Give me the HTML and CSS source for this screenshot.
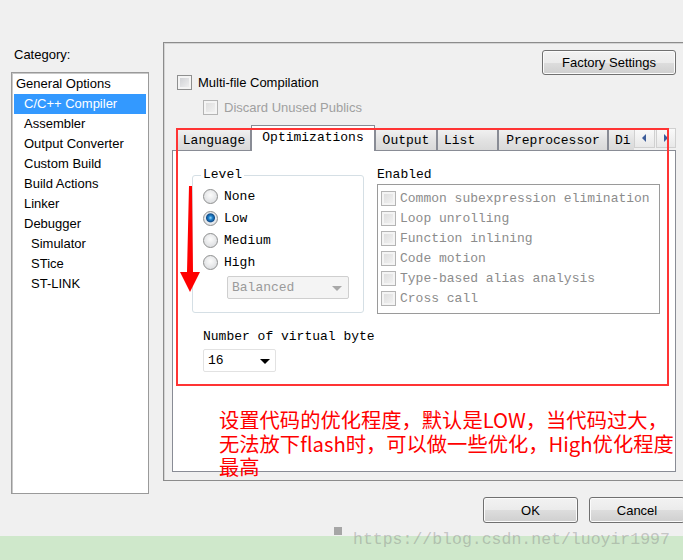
FILE: index.html
```html
<!DOCTYPE html>
<html lang="zh">
<head>
    <meta charset="UTF-8">
    <title>Options for node</title>
    <link rel="stylesheet" href="styles.css">
</head>
<body>

<div class="dialog">
    <div class="sidebar">
        <div class="cat-label">Category:</div>
        <ul class="cat-list">
            <li>General Options</li>
            <li class="lvl1 selected">C/C++ Compiler</li>
            <li class="lvl1">Assembler</li>
            <li class="lvl1">Output Converter</li>
            <li class="lvl1">Custom Build</li>
            <li class="lvl1">Build Actions</li>
            <li class="lvl1">Linker</li>
            <li class="lvl1">Debugger</li>
            <li class="lvl2">Simulator</li>
            <li class="lvl2">STice</li>
            <li class="lvl2">ST-LINK</li>
        </ul>
    </div>

    <div class="main">
        <div class="panel">
            <div class="panel-top">
                <div class="top-opts">
                    <div class="check"><span class="box"></span>Multi-file Compilation</div>
                    <div class="check sub disabled"><span class="box"></span>Discard Unused Publics</div>
                </div>
                <button class="btn factory">Factory Settings</button>
            </div>

            <div class="tabs">
                <div class="tab-row">
                    <div class="tab-strip">
                        <span class="tab w-lang">Language</span>
                        <span class="tab active w-opt">Optimizations</span>
                        <span class="tab w-out">Output</span>
                        <span class="tab w-list">List</span>
                        <span class="tab w-pre">Preprocessor</span>
                        <span class="tab w-di">Di</span>
                    </div>
                    <div class="tab-scroll">
                        <span class="scroll-btn"><span class="tri left"></span></span>
                        <span class="scroll-btn"><span class="tri right"></span></span>
                    </div>
                </div>

                <div class="tab-body">
                    <div class="opt-row">
                        <fieldset class="level">
                            <legend>Level</legend>
                            <div class="radio"><span class="dot"></span>None</div>
                            <div class="radio"><span class="dot on"></span>Low</div>
                            <div class="radio"><span class="dot"></span>Medium</div>
                            <div class="radio"><span class="dot"></span>High</div>
                            <div class="combo disabled balanced">Balanced<span class="caret"></span></div>
                        </fieldset>

                        <div class="enabled">
                            <div class="enabled-label">Enabled</div>
                            <div class="enabled-list">
                                <div class="item"><span class="box"></span>Common subexpression elimination</div>
                                <div class="item"><span class="box"></span>Loop unrolling</div>
                                <div class="item"><span class="box"></span>Function inlining</div>
                                <div class="item"><span class="box"></span>Code motion</div>
                                <div class="item"><span class="box"></span>Type-based alias analysis</div>
                                <div class="item"><span class="box"></span>Cross call</div>
                            </div>
                        </div>
                    </div>

                    <div class="vbyte">
                        <div class="vbyte-label">Number of virtual byte</div>
                        <div class="combo vbyte-combo">16<span class="caret"></span></div>
                    </div>

                    <p class="note">设置代码的优化程度，默认是LOW，当代码过大，<br>无法放下flash时，可以做一些优化，High优化程度<br>最高</p>
                </div>

                <!-- annotation drawn over the screenshot -->
                <div class="mark-box"></div>
                <svg class="mark-arrow" width="22" height="108" viewBox="0 0 22 108">
                    <polygon points="9,0 12,0 13,86 20,86 10,106 0,86 7,86" fill="#ff0000"/>
                </svg>
            </div>
        </div>

        <div class="actions">
            <button class="btn ok">OK</button>
            <button class="btn cancel">Cancel</button>
        </div>
    </div>
</div>

<div class="footer"></div>
<div class="watermark"><span class="wm-square"></span><span class="wm-text">https://blog.csdn.net/luoyir1997</span></div>

</body>
</html>
```

FILE: styles.css
```css
* {
    box-sizing: border-box;
}
body {
    margin: 0;
    width: 683px;
    height: 560px;
    overflow: hidden;
    position: relative;
    background: #f0f0f0;
    font-family: "Liberation Sans", Arial, sans-serif;
    font-size: 13px;
    color: #000;
}
.dialog {
    display: flex;
    height: 536px;
}

/* left category list */
.sidebar {
    width: 163px;
    flex: none;
    padding: 47px 0 0 11px;
}
.cat-label {
    height: 16px;
    line-height: 16px;
    padding-left: 3px;
}
.cat-list {
    list-style: none;
    margin: 9px 0 0;
    padding: 1px 2px;
    width: 138px;
    height: 422px;
    background: #fff;
    border: 1px solid #9a9a9a;
    box-shadow: inset 1px 1px 0 #c8c8c8;
}
.cat-list li {
    height: 20px;
    line-height: 20px;
    padding-left: 2px;
    white-space: nowrap;
}
.cat-list .lvl1 {
    padding-left: 10px;
}
.cat-list .lvl2 {
    padding-left: 17px;
}
.cat-list .selected {
    background: #3399ff;
    color: #fff;
}

/* right side */
.main {
    flex: 1;
    padding-top: 42px;
}
.panel {
    width: 530px;
    height: 439px;
    border: 1px solid #8c8c8c;
    box-shadow: inset 1px 1px 0 #d4d4d4;
    padding: 0 16px 0 8px;
}
.panel-top {
    display: flex;
    justify-content: space-between;
    height: 77px;
}
.top-opts {
    padding: 27px 0 0 5px;
}
.check {
    display: flex;
    align-items: center;
    gap: 6px;
    height: 25px;
    white-space: nowrap;
}
.check.sub {
    padding-left: 26px;
}
.disabled {
    color: #a0a0a0;
}
.box {
    flex: none;
    width: 15px;
    height: 15px;
    border: 1px solid #8e8f8f;
    background: linear-gradient(135deg, #c9cbcf, #f5f5f5);
    box-shadow: inset 0 0 0 2px #f4f4f4;
}
.disabled .box,
.enabled-list .box {
    border-color: #b4b4b4;
    background: linear-gradient(135deg, #dadada, #f5f5f5);
}

.btn {
    font: inherit;
    color: #000;
    padding: 0;
    border: 1px solid #707070;
    border-radius: 3px;
    background: linear-gradient(#f2f2f2 0%, #ebebeb 50%, #dddddd 51%, #cfcfcf 100%);
    box-shadow: inset 0 0 0 1px #fbfbfb;
}
.factory {
    width: 134px;
    height: 25px;
    margin-top: 7px;
}

/* tab control */
.tabs {
    position: relative;
    margin-top: 5px;
    font-family: "Liberation Mono", monospace;
    font-size: 13px;
}
.tab-row {
    position: relative;
    z-index: 1;
    display: flex;
    align-items: flex-end;
    height: 26px;
    padding-left: 5px;
}
.tab-strip {
    display: flex;
    align-items: flex-end;
    flex: 1;
    height: 26px;
    overflow: hidden;
}
.tab {
    flex: none;
    height: 22px;
    margin-bottom: 1px;
    line-height: 24px;
    text-align: center;
    white-space: nowrap;
    overflow: hidden;
    border: 1px solid #898c95;
    border-bottom: none;
    background: linear-gradient(#f2f2f2, #e3e3e3 50%, #d9d9d9);
}
.tab.active {
    height: 26px;
    margin-bottom: 0;
    line-height: 23px;
    background: #fff;
}
.w-lang { width: 74px; }
.w-opt { width: 124px; }
.w-out { width: 62px; }
.w-list { width: 61px; text-align: left; padding-left: 6px; }
.w-pre { width: 110px; }
.w-di { width: 40px; text-align: left; padding-left: 6px; }
.tab-scroll {
    display: flex;
    gap: 1px;
    width: 42px;
    height: 20px;
    margin-bottom: 3px;
}
.scroll-btn {
    flex: 1;
    display: flex;
    align-items: center;
    justify-content: center;
    border: 1px solid #d0d0d0;
    background: linear-gradient(#fafafa, #e8e8e8);
}
.tri {
    width: 0;
    height: 0;
    border-top: 4px solid transparent;
    border-bottom: 4px solid transparent;
}
.tri.left {
    border-right: 4px solid #3d5c9a;
}
.tri.right {
    border-left: 4px solid #3d5c9a;
}

.tab-body {
    margin-top: -1px;
    height: 322px;
    border: 1px solid #898c95;
    background: #fff;
    padding: 16px 0 0 19px;
}
.opt-row {
    display: flex;
    gap: 13px;
    align-items: flex-start;
}
.level {
    width: 172px;
    margin: 0;
    padding: 2px 0 13px 10px;
    border: 1px solid #d5dfe5;
    border-radius: 3px;
}
.level legend {
    padding: 0 2px;
    margin-left: -2px;
    line-height: 16px;
}
.radio {
    display: flex;
    align-items: center;
    gap: 6px;
    height: 22px;
}
.dot {
    flex: none;
    width: 15px;
    height: 15px;
    border-radius: 50%;
    border: 1px solid #8e8f8f;
    background: radial-gradient(circle at 50% 40%, #fcfcfc, #d4d6d9);
}
.dot.on {
    background: radial-gradient(circle at 50% 45%, #9bd9fb 0, #1f82cc 2px, #124f8c 4px, #e9ecef 5px, #d4d6d9 100%);
}
.combo {
    position: relative;
    height: 23px;
    line-height: 21px;
    padding-left: 4px;
    border: 1px solid #dcdcdc;
    border-radius: 2px;
    background: #fff;
}
.balanced {
    width: 122px;
    margin: 3px 0 0 24px;
    background: #f4f4f4;
    border-color: #cfcfcf;
    color: #9a9a9a;
}
.caret {
    position: absolute;
    right: 5px;
    top: 9px;
    width: 0;
    height: 0;
    border-left: 5px solid transparent;
    border-right: 5px solid transparent;
    border-top: 5px solid #000;
}
.balanced .caret {
    right: 6px;
    border-top-color: #a8a8a8;
}

.enabled {
    width: 283px;
}
.enabled-label {
    line-height: 16px;
}
.enabled-list {
    margin-top: 1px;
    height: 130px;
    padding: 3px 0 0 3px;
    border: 1px solid #9a9a9a;
    color: #8c8c8c;
}
.item {
    display: flex;
    align-items: center;
    gap: 4px;
    height: 20px;
    white-space: nowrap;
}

.vbyte {
    padding: 15px 0 0 11px;
}
.vbyte-label {
    line-height: 16px;
}
.vbyte-combo {
    width: 73px;
    margin-top: 4px;
    border-color: #e2e2e2;
}

.note {
    margin: 36px 0 0 27px;
    font-family: "Noto Sans CJK SC", sans-serif;
    font-size: 20.3px;
    line-height: 23.5px;
    color: #ff0000;
    white-space: nowrap;
}

/* red annotation over the screenshot */
.mark-box {
    position: absolute;
    left: 4px;
    top: 3px;
    width: 493px;
    height: 258px;
    border: 2px solid #ff3434;
    z-index: 2;
}
.mark-arrow {
    position: absolute;
    left: 8px;
    top: 61px;
    z-index: 2;
}

.actions {
    display: flex;
    justify-content: flex-end;
    gap: 11px;
    padding: 16px 8px 0 0;
}
.ok {
    width: 95px;
    height: 26px;
}
.cancel {
    width: 96px;
    height: 26px;
}

.footer {
    height: 24px;
    background: #cfe8cb;
}
.watermark {
    position: absolute;
    left: 334px;
    top: 527px;
    display: flex;
    align-items: flex-start;
    gap: 11px;
}
.wm-square {
    width: 8px;
    height: 8px;
    background: #a6a6a6;
}
.wm-text {
    margin-top: 3px;
    font-family: "Liberation Mono", monospace;
    font-size: 16.5px;
    line-height: 20px;
    color: rgba(128, 128, 128, 0.4);
}
```
